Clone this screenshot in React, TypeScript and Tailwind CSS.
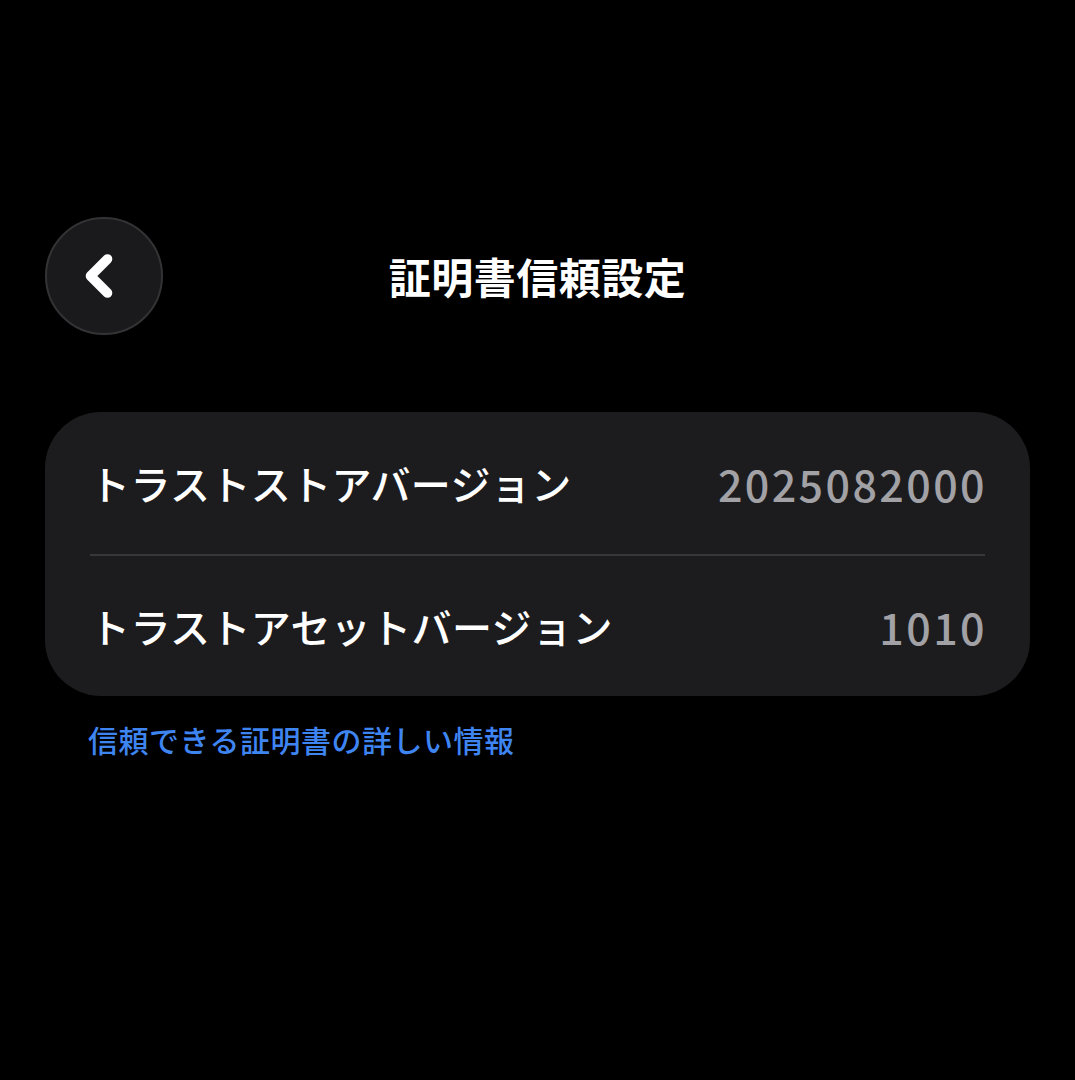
import { ChevronLeft } from "lucide-react";

const ROWS = [
  { label: "トラストストアバージョン", value: "2025082000" },
  { label: "トラストアセットバージョン", value: "1010" },
];

export default function App() {
  return (
    <div
      className="w-[1075px] h-[1080px] bg-black text-white"
      style={{ fontFamily: '"Noto Sans CJK JP", "Noto Sans", sans-serif' }}
    >
      <div className="relative flex items-center justify-center pt-[217px] h-[335px]">
        <button className="absolute left-[45px] top-[217px] w-[118px] h-[118px] rounded-full bg-[#1a1a1c] border-2 border-[#333335] flex items-center justify-center">
          <ChevronLeft className="w-[68px] h-[68px] text-white -ml-[10px]" strokeWidth={3.4} />
        </button>
        <h1 className="text-[42px] font-bold leading-none tracking-[0.5px]">証明書信頼設定</h1>
      </div>

      <div className="mx-[45px] mt-[77px] rounded-[56px] bg-[#1c1c1e] px-[45px]">
        {ROWS.map((row, i) => (
          <div
            key={row.label}
            className={`flex items-center justify-between h-[142px] ${i > 0 ? "border-t-2 border-[#38383a]" : ""}`}
          >
            <span className="text-[40px] font-medium leading-none tracking-[0.4px]">{row.label}</span>
            <span className="text-[43px] font-medium leading-none tracking-[2.4px] -mr-[2px] text-[#a1a1a6]">
              {row.value}
            </span>
          </div>
        ))}
      </div>

      <div className="px-[88px] mt-[28px]">
        <span className="text-[30px] font-medium text-[#3f85f2] leading-none tracking-[0.5px]">
          信頼できる証明書の詳しい情報
        </span>
      </div>
    </div>
  );
}
